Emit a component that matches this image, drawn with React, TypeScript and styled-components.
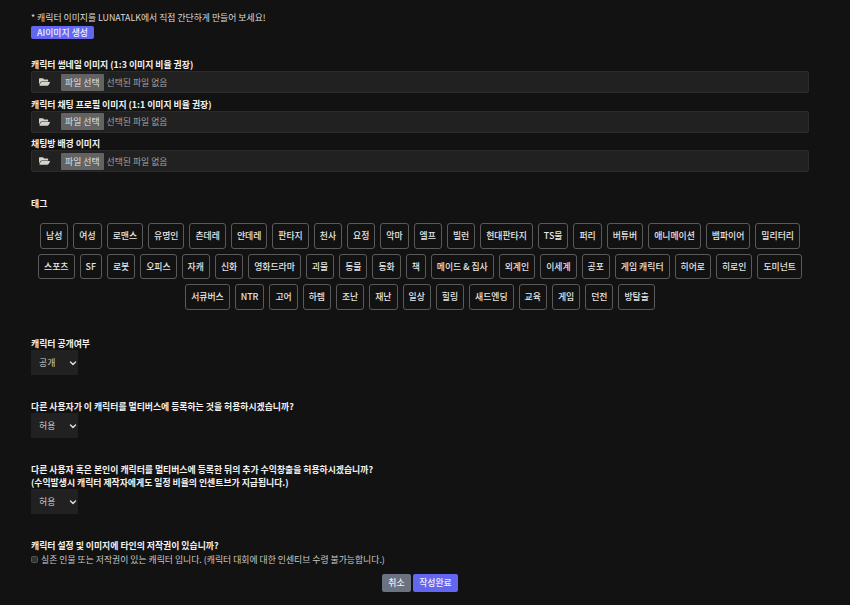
import React from 'react';
import styled, { createGlobalStyle } from 'styled-components';
import { FaFolderOpen } from 'react-icons/fa';

const TAGS = [
  '남성', '여성', '로맨스', '유명인', '츤데레', '얀데레', '판타지', '천사', '요정', '악마', '엘프', '빌런',
  '현대판타지', 'TS물', '퍼리', '버튜버', '애니메이션', '뱀파이어', '밀리터리',
  '스포츠', 'SF', '로봇', '오피스', '자캐', '신화', '영화드라마', '괴물', '동물', '동화', '책',
  '메이드 & 집사', '외계인', '이세계', '공포', '게임 캐릭터', '히어로', '히로인', '도미넌트',
  '서큐버스', 'NTR', '고어', '하렘', '조난', '재난', '일상', '힐링', '새드엔딩', '교육', '게임', '던전', '방탈출',
];

const GlobalStyle = createGlobalStyle`
  html, body {
    margin: 0;
    background: #121212;
    overflow: hidden;
  }
  body {
    font-family: 'Noto Sans CJK KR', 'Noto Sans', sans-serif;
    color: #e4e4e4;
    font-size: 8.85px;
  }
`;

const Page = styled.form`
  width: 850px;
  height: 605px;
  box-sizing: border-box;
  padding: 11px 41px 0 31px;
  display: flex;
  flex-direction: column;
`;

const Note = styled.div`
  line-height: 13px;
  color: #dcdcdc;
`;

const Accent = styled.button`
  align-self: flex-start;
  height: 13px;
  margin-top: 2px;
  padding: 0 6px;
  border: 0;
  border-radius: 2px;
  background: #6366f1;
  color: #f0f0ff;
  font: 500 8.85px/13px 'Noto Sans CJK KR', sans-serif;
`;

const Label = styled.label<{ $top?: number }>`
  display: block;
  margin-top: ${(p) => p.$top ?? 0}px;
  font-weight: 700;
  line-height: 13px;
  color: #f2f2f2;
`;

const FileBox = styled.div`
  height: 22px;
  margin-bottom: 4.5px;
  box-sizing: border-box;
  display: flex;
  align-items: center;
  padding-left: 7px;
  background: #212121;
  border: 1px solid #2b2b2b;
  border-radius: 2px;
  color: #d8d8d8;
`;

const FolderIcon = styled(FaFolderOpen)`
  width: 11px;
  height: 10px;
  color: #d4d4cc;
`;

const FakeFile = styled.span`
  height: 17px;
  margin-left: 11px;
  padding: 0 4px;
  display: flex;
  align-items: center;
  background: #636363;
  border-radius: 1px;
  color: #e2e2e2;
`;

const FileName = styled.span`
  margin-left: 3px;
  color: #a4a4a4;
`;

const TagList = styled.div`
  margin: 13px -1px 0;
  display: flex;
  flex-wrap: wrap;
  justify-content: center;
  gap: 5px;
`;

const Tag = styled.span`
  height: 25.5px;
  box-sizing: border-box;
  display: flex;
  align-items: center;
  padding: 0 5px;
  border: 1px solid #5a5a5a;
  border-radius: 3px;
  color: #e6e6e6;
  font-weight: 500;
  white-space: nowrap;
`;

const SelectBox = styled.div`
  width: 47px;
  height: 25px;
  box-sizing: border-box;
  display: flex;
  align-items: center;
  justify-content: space-between;
  padding: 0 1px 0 8px;
  background: #212121;
  color: #cfcfcf;
`;

const Chevron = () => (
  <svg width="8" height="8" viewBox="0 0 16 16" fill="none" stroke="#d8d8d8" strokeWidth="3" strokeLinecap="round" strokeLinejoin="round">
    <path d="M3 6l5 5 5-5" />
  </svg>
);

const CheckRow = styled.div`
  display: flex;
  align-items: center;
  gap: 3px;
  height: 13px;
  margin-top: 1px;
  color: #c8c8c8;
`;

const CheckBox = styled.span`
  width: 7px;
  height: 7px;
  box-sizing: border-box;
  border: 1px solid #555;
  border-radius: 1.5px;
  background: #333;
`;

const Actions = styled.div`
  margin-top: 8px;
  display: flex;
  justify-content: center;
  gap: 2px;
`;

const ActionButton = styled.button<{ $primary?: boolean }>`
  height: 18px;
  padding: 0 6.3px;
  border: 0;
  border-radius: 2px;
  background: ${(p) => (p.$primary ? '#6366f1' : '#6b7280')};
  color: #eef0f6;
  font: 500 8.85px/18px 'Noto Sans CJK KR', sans-serif;
`;

const FileField = ({ title, top }: { title: string; top?: number }) => (
  <>
    <Label $top={top}>{title}</Label>
    <FileBox>
      <FolderIcon />
      <FakeFile>파일 선택</FakeFile>
      <FileName>선택된 파일 없음</FileName>
    </FileBox>
  </>
);

export default function App() {
  return (
    <>
      <GlobalStyle />
      <Page>
        <Note>* 캐릭터 이미지를 LUNATALK에서 직접 간단하게 만들어 보세요!</Note>
        <Accent type="button">AI이미지 생성</Accent>
        <FileField title="캐릭터 썸네일 이미지 (1:3 이미지 비율 권장)" top={19} />
        <FileField title="캐릭터 채팅 프로필 이미지 (1:1 이미지 비율 권장)" />
        <FileField title="채팅방 배경 이미지" />

        <Label $top={20.5}>태그</Label>
        <TagList>
          {TAGS.map((t) => (
            <Tag key={t}>{t}</Tag>
          ))}
        </TagList>

        <Label $top={27.5}>캐릭터 공개여부</Label>
        <SelectBox>공개<Chevron /></SelectBox>

        <Label $top={25}>다른 사용자가 이 캐릭터를 멀티버스에 등록하는 것을 허용하시겠습니까?</Label>
        <SelectBox>허용<Chevron /></SelectBox>

        <Label $top={25}>
          다른 사용자 혹은 본인이 캐릭터를 멀티버스에 등록한 뒤의 추가 수익창출을 허용하시겠습니까?
          <br />
          (수익발생시 캐릭터 제작자에게도 일정 비율의 인센트브가 지급됩니다.)
        </Label>
        <SelectBox>허용<Chevron /></SelectBox>

        <Label $top={25}>캐릭터 설정 및 이미지에 타인의 저작권이 있습니까?</Label>
        <CheckRow>
          <CheckBox />
          실존 인물 또는 저작권이 있는 캐릭터 입니다. (캐릭터 대회에 대한 인센티브 수령 불가능합니다.)
        </CheckRow>

        <Actions>
          <ActionButton type="button">취소</ActionButton>
          <ActionButton type="button" $primary>작성완료</ActionButton>
        </Actions>
      </Page>
    </>
  );
}
